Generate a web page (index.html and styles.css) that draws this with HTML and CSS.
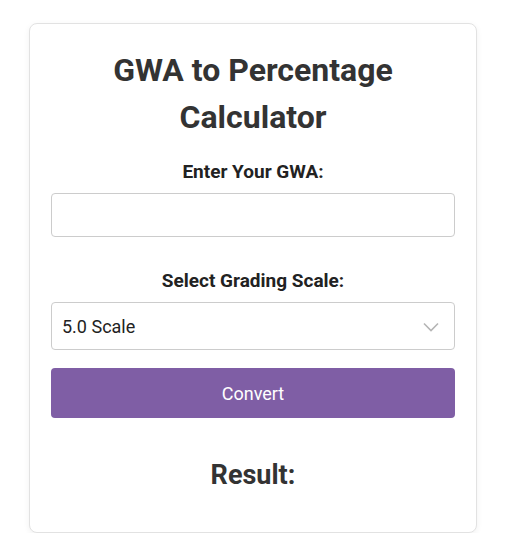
FILE: index.html
```html
<!DOCTYPE html>
<html lang="en">
<head>
  <meta charset="UTF-8" />
  <meta name="viewport" content="width=device-width, initial-scale=1.0"/>
  <title>GWA to Percentage Calculator</title>
  <link rel="stylesheet" href="styles.css">
</head>
<body>
  <div class="container">
    <h1>GWA to Percentage Calculator</h1>

    <label for="gwa">Enter Your GWA:</label>
    <input type="number" id="gwa" class="field" step="0.01" />

    <label for="scale" class="scale-label">Select Grading Scale:</label>
    <div class="select-wrap">
      <select id="scale" class="field select">
        <option value="5">5.0 Scale</option>
        <option value="4">4.0 Scale</option>
        <option value="1">1.0 Scale</option>
      </select>
      <svg class="chevron" width="16" height="10" viewBox="0 0 16 10">
        <path d="M1 1.5 L8 8.5 L15 1.5" fill="none" stroke="#b5b5b5" stroke-width="1.6"/>
      </svg>
    </div>

    <button class="convert" onclick="convert()">Convert</button>

    <h2 class="result">Result:</h2>
    <p id="output" class="output"></p>
  </div>

  <script>
    function convert() {
      const gwa = parseFloat(document.getElementById('gwa').value);
      const scale = document.getElementById('scale').value;
      const out = document.getElementById('output');
      if (isNaN(gwa)) {
        out.textContent = 'Please enter a valid GWA.';
        return;
      }
      let pct;
      if (scale === '5') {
        pct = 100 - ((gwa - 1) / 4) * 25;
      } else if (scale === '4') {
        pct = 75 + (gwa / 4) * 25;
      } else {
        pct = 100 - (gwa - 1) * 25;
      }
      out.textContent = pct.toFixed(2) + '%';
    }
  </script>
</body>
</html>
```

FILE: styles.css
```css
* {
  box-sizing: border-box;
}

body {
  margin: 0;
  padding: 23px 10px 0 0;
  font-family: Roboto, "Liberation Sans", Arial, sans-serif;
  background: #fff;
  color: #333;
}

.container {
  width: 448px;
  margin: 0 auto;
  padding: 23px 21px 41px;
  background: #fff;
  border: 1px solid #e2e2e2;
  border-radius: 8px;
  box-shadow: 0 2px 6px rgba(0,0,0,0.06);
  text-align: center;
}

h1 {
  margin: 0 0 20px;
  font-size: 32px;
  line-height: 47px;
  font-weight: 700;
  color: #333;
}

label {
  display: block;
  font-size: 19px;
  line-height: 22px;
  font-weight: 700;
  color: #222;
  margin-bottom: 10px;
}

.scale-label {
  margin-top: 33px;
}

.field {
  display: block;
  width: 100%;
  height: 44px;
  padding: 0 10px;
  font-family: inherit;
  font-size: 18px;
  color: #222;
  background: #fff;
  border: 1px solid #ccc;
  border-radius: 4px;
  outline: none;
}

.select-wrap {
  position: relative;
}

.select {
  height: 48px;
  appearance: none;
  -webkit-appearance: none;
  cursor: pointer;
}

.chevron {
  position: absolute;
  right: 16px;
  top: 20px;
  pointer-events: none;
}

.convert {
  display: block;
  width: 100%;
  height: 50px;
  margin-top: 18px;
  font-family: inherit;
  font-size: 18px;
  color: #fff;
  background: #7f5ea5;
  border: none;
  border-radius: 4px;
  cursor: pointer;
}

.convert:hover {
  background: #6d4e92;
}

.result {
  margin: 41px 0 0;
  font-size: 27px;
  line-height: 32px;
  font-weight: 700;
  color: #333;
}

.output {
  margin: 0;
  font-size: 18px;
}

.output:empty {
  display: none;
}
```
